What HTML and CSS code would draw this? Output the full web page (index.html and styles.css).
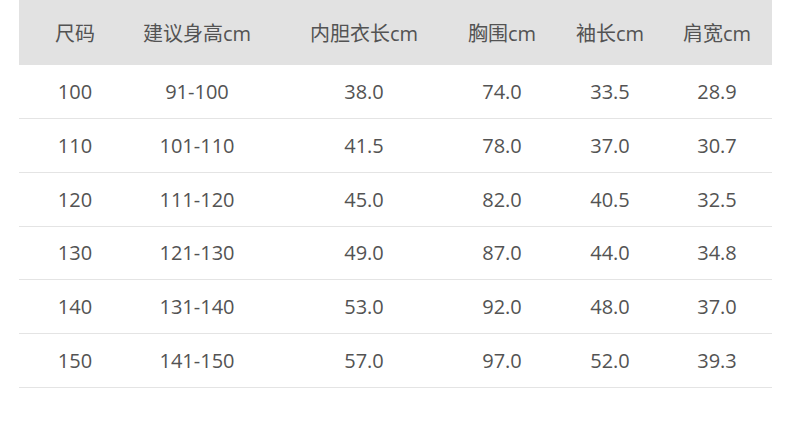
FILE: index.html
```html
<!DOCTYPE html>
<html lang="zh">
<head>
<meta charset="utf-8">
<link rel="stylesheet" href="styles.css">
</head>
<body>
<div class="page">
  <div class="size-table">
    <div class="row head"><div>尺码</div><div>建议身高cm</div><div>内胆衣长cm</div><div>胸围cm</div><div>袖长cm</div><div>肩宽cm</div></div>
    <div class="row"><div>100</div><div>91-100</div><div>38.0</div><div>74.0</div><div>33.5</div><div>28.9</div></div>
    <div class="row"><div>110</div><div>101-110</div><div>41.5</div><div>78.0</div><div>37.0</div><div>30.7</div></div>
    <div class="row"><div>120</div><div>111-120</div><div>45.0</div><div>82.0</div><div>40.5</div><div>32.5</div></div>
    <div class="row"><div>130</div><div>121-130</div><div>49.0</div><div>87.0</div><div>44.0</div><div>34.8</div></div>
    <div class="row"><div>140</div><div>131-140</div><div>53.0</div><div>92.0</div><div>48.0</div><div>37.0</div></div>
    <div class="row"><div>150</div><div>141-150</div><div>57.0</div><div>97.0</div><div>52.0</div><div>39.3</div></div>
  </div>
</div>
</body>
</html>
```

FILE: styles.css
```css
html, body {
  margin: 0;
  padding: 0;
  background: #ffffff;
}
.page {
  padding: 0 18px 0 19px;
}
.size-table {
  width: 753px;
  font-family: "Open Sans", "Noto Sans CJK SC", sans-serif;
  font-size: 20px;
  color: #535353;
}
.row {
  display: grid;
  grid-template-columns: 112px 132px 202px 74px 142px 91px;
  align-items: center;
  height: 53.85px;
  box-sizing: border-box;
  border-bottom: 1px solid #e4e4e4;
}
.row > div {
  text-align: center;
  white-space: nowrap;
}
.row > div:last-child {
  padding-right: 19px;
}
.row.head {
  height: 65px;
  background: #e2e2e2;
  border-bottom: none;
  padding-bottom: 1px;
}
```
